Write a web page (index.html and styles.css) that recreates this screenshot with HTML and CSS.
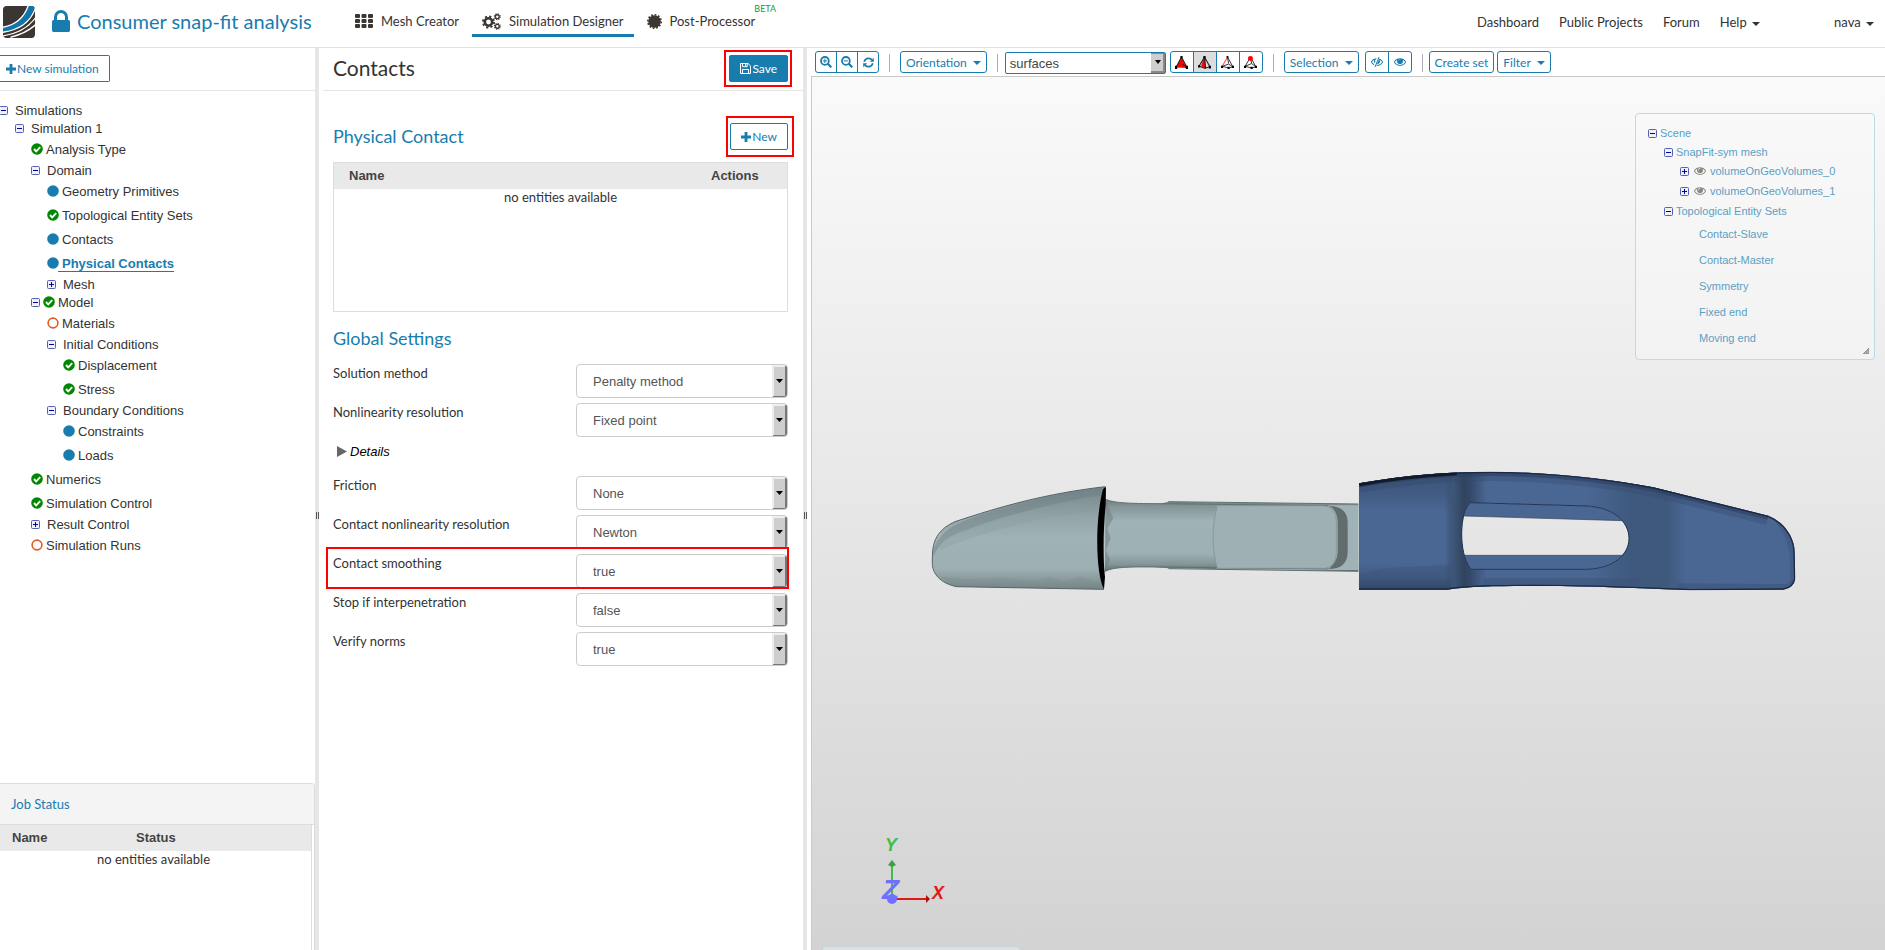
FILE: index.html
```html
<!DOCTYPE html>
<html lang="en">
<head>
  <meta charset="UTF-8">
  <meta name="viewport" content="width=device-width, initial-scale=1.0">
  <title>Consumer snap-fit analysis</title>
  <link rel="stylesheet" href="styles.css">
</head>
<body>
  <!-- shared icons -->
  <svg class="defs" width="0" height="0" aria-hidden="true">
    <symbol id="i-check" viewBox="0 0 12 12"><circle cx="6" cy="6" r="5.8" fill="#080"/><path d="M3 6l2.2 2.3L9.2 4.2" fill="none" stroke="#fff" stroke-width="1.9"/></symbol>
    <symbol id="i-dot" viewBox="0 0 12 12"><circle cx="6" cy="6" r="5.8" fill="#187cae"/></symbol>
    <symbol id="i-ring" viewBox="0 0 12 12"><circle cx="6" cy="6" r="4.9" fill="none" stroke="#e25b26" stroke-width="1.6"/></symbol>
    <symbol id="i-minus" viewBox="0 0 9 9"><rect x=".5" y=".5" width="8" height="8" rx="1" fill="#f0f0f4" stroke="#5560b0"/><path d="M2 4.5h5" stroke="#00a"/></symbol>
    <symbol id="i-plus" viewBox="0 0 9 9"><rect x=".5" y=".5" width="8" height="8" rx="1" fill="#f0f0f4" stroke="#5560b0"/><path d="M2 4.5h5M4.5 2v5" stroke="#00a"/></symbol>
    <symbol id="i-add" viewBox="0 0 10 10"><path d="M5 0v10M0 5h10" stroke="currentColor" stroke-width="2.8"/></symbol>
    <symbol id="i-eye" viewBox="0 384 1792 1152"><path fill="currentColor" d="M1664 960q-152-236-381-353 61 104 61 225 0 185-131.5 316.5t-316.5 131.5-316.5-131.5-131.5-316.5q0-121 61-225-229 117-381 353 133 205 333.5 326.5t434.5 121.5 434.5-121.5 333.5-326.5zm-720-384q0-20-14-34t-34-14q-125 0-214.5 89.5t-89.5 214.5q0 20 14 34t34 14 34-14 14-34q0-86 61-147t147-61q20 0 34-14t14-34zm848 384q0 34-20 69-140 230-376.5 368.5t-499.5 138.5-499.5-139-376.5-368q-20-35-20-69t20-69q140-229 376.5-368t499.5-139 499.5 139 376.5 368q20 35 20 69z"/></symbol>
  </svg>

  <header class="topbar">
    <a class="logo" href="#" aria-label="Home">
      <svg width="32" height="32" viewBox="0 0 96 96">
        <clipPath id="logo-clip"><rect width="96" height="96" rx="11"/></clipPath>
        <g clip-path="url(#logo-clip)">
          <rect width="96" height="96" fill="#3c3632"/>
          <path d="M74 0C64 34 38 57 0 65V78C50 70 82 48 96 0Z" fill="#0f75ac"/>
          <path d="M76 -2C64 34 38 57 -2 64" fill="none" stroke="#fff" stroke-width="4"/>
          <path d="M98 4C84 48 50 72 -2 79" fill="none" stroke="#fff" stroke-width="4"/>
          <path d="M-2 90C44 84 76 64 98 35" fill="none" stroke="#fff" stroke-width="4"/>
          <path d="M22 94C54 86 76 76 98 56" fill="none" stroke="#fff" stroke-width="4"/>
        </g>
      </svg>
    </a>
    <h1 class="project">
      <svg width="18" height="22" viewBox="320 128 1152 1408"><path fill="currentColor" d="M640 768h512v-192q0-106-75-181t-181-75-181 75-75 181v192zm832 96v576q0 40-28 68t-68 28h-960q-40 0-68-28t-28-68v-576q0-40 28-68t68-28h32v-192q0-184 132-316t316-132 316 132 132 316v192h32q40 0 68 28t28 68z"/></svg>
      Consumer snap-fit analysis
    </h1>
    <nav class="modes">
      <a href="#">
        <svg width="18" height="14" viewBox="0 0 18 14" fill="currentColor"><rect width="5" height="4" rx="1"/><rect x="6.5" width="5" height="4" rx="1"/><rect x="13" width="5" height="4" rx="1"/><rect y="5" width="5" height="4" rx="1"/><rect x="6.5" y="5" width="5" height="4" rx="1"/><rect x="13" y="5" width="5" height="4" rx="1"/><rect y="10" width="5" height="4" rx="1"/><rect x="6.5" y="10" width="5" height="4" rx="1"/><rect x="13" y="10" width="5" height="4" rx="1"/></svg>
        Mesh Creator
      </a>
      <a href="#" class="active">
        <svg width="19" height="17" viewBox="0 0 19 17" fill="none" stroke="currentColor">
          <circle cx="6.5" cy="9" r="3.7" stroke-width="2.6"/><circle cx="6.5" cy="9" r="5.6" stroke-width="1.8" stroke-dasharray="2.2 2.2"/>
          <circle cx="15.3" cy="3.7" r="1.9" stroke-width="1.4"/><circle cx="15.3" cy="3.7" r="2.9" stroke-width="1.2" stroke-dasharray="1.15 1.13"/>
          <circle cx="15.3" cy="13.3" r="1.9" stroke-width="1.4"/><circle cx="15.3" cy="13.3" r="2.9" stroke-width="1.2" stroke-dasharray="1.15 1.13"/>
        </svg>
        Simulation Designer
      </a>
      <a href="#">
        <svg width="15" height="15" viewBox="0 0 15 15"><circle cx="7.5" cy="7.5" r="6.3" fill="currentColor"/><circle cx="7.5" cy="7.5" r="6.7" fill="none" stroke="currentColor" stroke-width="1.6" stroke-dasharray="1.75 1.75"/></svg>
        Post-Processor
        <sup class="beta">BETA</sup>
      </a>
    </nav>
    <nav class="site-nav">
      <a href="#">Dashboard</a>
      <a href="#">Public Projects</a>
      <a href="#">Forum</a>
      <a href="#">Help <span class="caret"></span></a>
      <a href="#" class="user">nava <span class="caret"></span></a>
    </nav>
  </header>

  <main class="workspace">
    <aside class="sidebar">
      <div class="panel-head">
        <button type="button" class="btn btn-edge"><svg width="10" height="10"><use href="#i-add"/></svg>New simulation</button>
      </div>
      <ul class="tree">
        <li><div class="row"><svg class="tg"><use href="#i-minus"/></svg><a href="#">Simulations</a></div>
          <ul>
            <li><div class="row"><svg class="tg"><use href="#i-minus"/></svg><a href="#">Simulation 1</a></div>
              <ul>
                <li><div class="row leaf"><svg class="st"><use href="#i-check"/></svg><a href="#">Analysis Type</a></div></li>
                <li><div class="row"><svg class="tg"><use href="#i-minus"/></svg><a href="#">Domain</a></div>
                  <ul>
                    <li><div class="row leaf"><svg class="st"><use href="#i-dot"/></svg><a href="#">Geometry Primitives</a></div></li>
                    <li><div class="row leaf"><svg class="st"><use href="#i-check"/></svg><a href="#">Topological Entity Sets</a></div></li>
                    <li><div class="row leaf"><svg class="st"><use href="#i-dot"/></svg><a href="#">Contacts</a></div></li>
                    <li><div class="row leaf"><svg class="st"><use href="#i-dot"/></svg><a href="#" class="current">Physical Contacts</a></div></li>
                    <li><div class="row"><svg class="tg"><use href="#i-plus"/></svg><a href="#">Mesh</a></div></li>
                  </ul>
                </li>
                <li><div class="row"><svg class="tg"><use href="#i-minus"/></svg><svg class="st"><use href="#i-check"/></svg><a href="#">Model</a></div>
                  <ul>
                    <li><div class="row leaf"><svg class="st"><use href="#i-ring"/></svg><a href="#">Materials</a></div></li>
                    <li><div class="row"><svg class="tg"><use href="#i-minus"/></svg><a href="#">Initial Conditions</a></div>
                      <ul>
                        <li><div class="row leaf"><svg class="st"><use href="#i-check"/></svg><a href="#">Displacement</a></div></li>
                        <li><div class="row leaf"><svg class="st"><use href="#i-check"/></svg><a href="#">Stress</a></div></li>
                      </ul>
                    </li>
                    <li><div class="row"><svg class="tg"><use href="#i-minus"/></svg><a href="#">Boundary Conditions</a></div>
                      <ul>
                        <li><div class="row leaf"><svg class="st"><use href="#i-dot"/></svg><a href="#">Constraints</a></div></li>
                        <li><div class="row leaf"><svg class="st"><use href="#i-dot"/></svg><a href="#">Loads</a></div></li>
                      </ul>
                    </li>
                  </ul>
                </li>
                <li><div class="row leaf"><svg class="st"><use href="#i-check"/></svg><a href="#">Numerics</a></div></li>
                <li><div class="row leaf"><svg class="st"><use href="#i-check"/></svg><a href="#">Simulation Control</a></div></li>
                <li><div class="row"><svg class="tg"><use href="#i-plus"/></svg><a href="#">Result Control</a></div></li>
                <li><div class="row leaf"><svg class="st"><use href="#i-ring"/></svg><a href="#">Simulation Runs</a></div></li>
              </ul>
            </li>
          </ul>
        </li>
      </ul>
      <section class="jobs">
        <h2>Job Status</h2>
        <div class="jobs-body">
          <table class="grid">
            <thead><tr><th class="job-name">Name</th><th>Status</th></tr></thead>
            <tbody><tr><td colspan="2">no entities available</td></tr></tbody>
          </table>
        </div>
      </section>
    </aside>

    <div class="splitter"></div>

    <section class="settings">
      <div class="panel-head settings-head">
        <h2>Contacts</h2>
        <span class="mark mark-save"><button type="button" class="btn btn-primary"><svg width="11" height="11" viewBox="0 0 11 11" fill="none" stroke="currentColor"><path d="M.5.5h7.6l2.4 2.4v7.6H.5z"/><path d="M2.5.5v3.2h4.7V.5M2.5 10.5v-4h6v4M5.7.5v3"/></svg>Save</button></span>
      </div>
      <div class="settings-body">
        <div class="section-head">
          <h3>Physical Contact</h3>
          <span class="mark mark-new"><button type="button" class="btn"><svg width="10" height="10"><use href="#i-add"/></svg>New</button></span>
        </div>
        <div class="contact-list">
          <table class="grid">
            <thead><tr><th class="contact-name">Name</th><th>Actions</th></tr></thead>
            <tbody><tr><td colspan="2">no entities available</td></tr></tbody>
          </table>
        </div>
        <h3>Global Settings</h3>
        <form class="fields">
          <div class="field"><label for="method">Solution method</label><select id="method"><option>Penalty method</option></select></div>
          <div class="field"><label for="nonlin">Nonlinearity resolution</label><select id="nonlin"><option>Fixed point</option></select></div>
          <button type="button" class="details"><svg width="10" height="11" viewBox="0 0 10 11"><path d="M0 0l10 5.5L0 11z" fill="#666"/></svg>Details</button>
          <div class="field"><label for="friction">Friction</label><select id="friction"><option>None</option></select></div>
          <div class="field"><label for="contact-nonlin">Contact nonlinearity resolution</label><select id="contact-nonlin"><option>Newton</option></select></div>
          <div class="field mark mark-row"><label for="smoothing">Contact smoothing</label><select id="smoothing"><option>true</option><option>false</option></select></div>
          <div class="field"><label for="stop">Stop if interpenetration</label><select id="stop"><option>false</option><option>true</option></select></div>
          <div class="field"><label for="verify">Verify norms</label><select id="verify"><option>true</option><option>false</option></select></div>
        </form>
      </div>
    </section>

    <div class="splitter"></div>

    <section class="viewer">
      <div class="toolbar">
        <div class="group">
          <button type="button" aria-label="Zoom in"><svg width="12" height="12" viewBox="0 0 12 12" fill="none" stroke="currentColor"><circle cx="4.9" cy="4.9" r="3.9" stroke-width="1.8"/><path d="M7.8 7.8l3.5 3.5" stroke-width="2.2"/><path d="M2.8 4.9H7M4.9 2.8V7"/></svg></button>
          <button type="button" aria-label="Zoom out"><svg width="12" height="12" viewBox="0 0 12 12" fill="none" stroke="currentColor"><circle cx="4.9" cy="4.9" r="3.9" stroke-width="1.8"/><path d="M7.8 7.8l3.5 3.5" stroke-width="2.2"/><path d="M2.8 4.9H7"/></svg></button>
          <button type="button" aria-label="Reset view"><svg width="11" height="11" viewBox="0 0 11 11"><path d="M1.2 4.8C2 1.2 6.5.2 8.9 2.9M9.8 6.2C9 9.8 4.5 10.8 2.1 8.1" fill="none" stroke="currentColor" stroke-width="1.8"/><path d="M10.8.8v4H6.8zM.2 10.2v-4h4z" fill="currentColor"/></svg></button>
        </div>
        <i class="sep"></i>
        <button type="button" class="tool">Orientation <span class="caret"></span></button>
        <i class="sep"></i>
        <select class="render" aria-label="Render mode"><option>surfaces</option></select>
        <div class="group pick">
          <button type="button" aria-label="Pick volumes"><svg width="13" height="13" viewBox="0 0 12 12"><path d="M6 1L1 10.5l9.5.5z" fill="#f00"/><path d="M6 1L1 10.5M6 1l5 9.5M11 10.5l-4-3" stroke="#222" fill="none"/><path d="M0 9h2v3H0zM10 9h2v3h-2zM5 0h2v2H5z"/></svg></button>
          <button type="button" class="on" aria-label="Pick faces"><svg width="13" height="13" viewBox="0 0 12 12"><path d="M6 1L3.5 9 6.5 11z" fill="#f00" stroke="#f00"/><path d="M6 1L1 9.5l6 2M6 1l5 9M7 11l4-1M6 1l1 10" stroke="#222" fill="none"/><path d="M0 8.5h2v2H0zM10 9h2v2.5h-2zM5 0h2v2H5z"/></svg></button>
          <button type="button" aria-label="Pick edges"><svg width="13" height="13" viewBox="0 0 12 12"><path d="M6 1l5 9-4 1-6-1.500 6-2 4 2.500M6 1l1 6" stroke="#333" fill="none" stroke-width=".9"/><path d="M6 1L1.200 9.500" stroke="#f55"/><path d="M0 9h2v2H0zM10 9h2v2h-2zM6 10h2v2H6zM5.200 0h1.600v2H5.200z"/></svg></button>
          <button type="button" aria-label="Pick vertices"><svg width="13" height="13" viewBox="0 0 12 12"><path d="M6 1l5 9-4 1-6-1.500L6 1l1 6-6 2.500M7 7l4 3" stroke="#333" fill="none" stroke-width=".9"/><path d="M0 9h2v2H0zM10 9h2v2h-2zM6 10h2v2H6z"/><circle cx="6" cy="2.300" r="2.300" fill="#f00"/></svg></button>
        </div>
        <i class="sep"></i>
        <button type="button" class="tool">Selection <span class="caret"></span></button>
        <div class="group eyes">
          <button type="button" aria-label="Hide selection"><svg width="12" height="10" viewBox="0 0 12 10"><use href="#i-eye" width="12" height="8" y="1"/><path d="M7.5 0l-4 10" stroke="#fff" stroke-width="2.5"/><path d="M8 0L4 10" stroke="currentColor"/></svg></button>
          <button type="button" aria-label="Show all"><svg width="12" height="8"><use href="#i-eye"/><circle cx="6" cy="3.5" r="2.2" fill="currentColor"/></svg></button>
        </div>
        <i class="sep"></i>
        <button type="button" class="tool">Create set</button>
        <button type="button" class="tool">Filter <span class="caret"></span></button>
      </div>

      <div class="scene">
        <svg class="model" viewBox="812 77 1073 873" preserveAspectRatio="xMinYMin meet" role="img" aria-label="Snap-fit mesh">
          <defs>
            <linearGradient id="teal" x1="0" y1="0" x2="0" y2="1">
              <stop offset="0" stop-color="#74858a"/><stop offset=".3" stop-color="#93a5a8"/><stop offset=".5" stop-color="#9fb2b6"/><stop offset=".8" stop-color="#9dafb2"/><stop offset=".92" stop-color="#879799"/><stop offset="1" stop-color="#6d7b7d"/>
            </linearGradient>
            <linearGradient id="shaft" x1="0" y1="0" x2="0" y2="1">
              <stop offset="0" stop-color="#6c7a7c"/><stop offset=".1" stop-color="#849597"/><stop offset=".3" stop-color="#9fb2b6"/><stop offset=".75" stop-color="#9db0b3"/><stop offset=".9" stop-color="#849597"/><stop offset="1" stop-color="#5d6a6b"/>
            </linearGradient>
            <linearGradient id="block" x1="0" y1="0" x2="0" y2="1">
              <stop offset="0" stop-color="#3a5276"/><stop offset=".18" stop-color="#415b83"/><stop offset=".34" stop-color="#4a6794"/><stop offset=".76" stop-color="#4a6794"/><stop offset=".9" stop-color="#3f597f"/><stop offset="1" stop-color="#2b3f5d"/>
            </linearGradient>
            <linearGradient id="fold" x1="0" y1="0" x2="1" y2="0">
              <stop offset="0" stop-color="#34496a" stop-opacity="0"/><stop offset=".2" stop-color="#3d5678"/><stop offset=".45" stop-color="#30445f"/><stop offset=".6" stop-color="#34496a"/><stop offset="1" stop-color="#34496a" stop-opacity="0"/>
            </linearGradient>
            <linearGradient id="bend" x1="0" y1="0" x2="1" y2="0">
              <stop offset="0" stop-color="#3f597d" stop-opacity="0"/><stop offset=".45" stop-color="#3f597d"/><stop offset=".8" stop-color="#3f597d"/><stop offset="1" stop-color="#3f597d" stop-opacity="0"/>
            </linearGradient>
            <clipPath id="body-clip"><path clip-rule="evenodd" d="M57 100C200 75 320 65 450 65 620 66 800 85 940 112L1285 197C1330 215 1365 260 1364 310L1366 385Q1362 415 1330 419L1050 421C900 415 760 408 600 408 480 408 400 408 320 419H57ZM392 158L740 168C820 172 867 215 867 265 867 315 820 355 740 358H392C372 330 365 290 365 250 365 210 372 175 392 158Z"/></clipPath>
          </defs>

          <!-- slave part -->
          <g transform="translate(920 450) scale(.33333)">
            <path d="M556 147C575 158 620 161 720 161L745 155 1315 162V364L745 355 700 351C620 350 575 352 554 365Z" fill="url(#shaft)"/>
            <path d="M890 166H1315V360H890Z" fill="#9fb2b6"/>
            <path d="M745 155L1315 162M556 147C575 158 620 161 720 161L1225 167M554 365C575 352 620 350 700 351L1225 357M745 356L1315 364" fill="none" stroke="#617071" stroke-width="3"/>
            <path d="M1225 167Q1283 170 1283 215V305Q1283 357 1225 357 1250 340 1253 310V215Q1250 175 1225 167Z" fill="#626c6c"/>
            <path d="M892 167H1210Q1247 170 1249 212V312Q1246 350 1215 355H892C875 300 875 225 892 167Z" fill="#9eb0b3" stroke="#7d8d8f" stroke-width="2"/>
            <path d="M556 150L580 205 562 235 572 265 558 300 570 330 556 362Z" fill="#6c7b7d" opacity=".5"/>
            <path d="M37 320C37 265 60 235 105 215 240 170 380 130 556 110L552 418 110 410C60 400 37 370 37 340Z" fill="url(#teal)"/>
            <path d="M40 300C60 245 100 225 160 202 290 160 420 128 555 112L552 135C430 150 260 195 140 240 80 258 60 280 40 320Z" fill="#6f7f82" opacity=".45"/>
            <path d="M60 270C150 225 300 180 470 155L545 180C380 195 190 245 60 300Z" fill="#879a9d" opacity=".3"/>
            <path d="M60 380L130 388 270 385 330 395 390 382 430 395 480 380 545 400 552 418 110 410Z" fill="#7e8e91" opacity=".5"/>
            <path d="M105 215C240 170 380 130 556 110M552 418L110 410C60 400 37 370 37 340V320C37 265 60 235 105 215" fill="none" stroke="#566466" stroke-width="3"/>
            <path d="M549 118L558 110 557 165C549 240 549 330 555 380L552 418C527 370 524 210 549 118Z" fill="#000"/>
          </g>

          <!-- master part -->
          <g transform="translate(1340 450) scale(.33333)">
            <g clip-path="url(#body-clip)">
              <path d="M57 60H1370V425H57Z" fill="#4a6794"/>
              <path d="M57 65H345V421H57Z" fill="url(#block)"/>
              <path d="M57 375L130 355 330 345 345 421H57Z" fill="#3c5478" opacity=".35"/>
              <path d="M315 60H440V425H315Z" fill="url(#fold)"/>
              <path d="M740 60H1040V425H740Z" fill="url(#bend)"/>
              <path d="M1010 400L1340 402 1366 385V425H1010Z" fill="#3c5478" opacity=".6"/>
              <path d="M430 385H900V425H430Z" fill="#3c5478" opacity=".6"/>
              <path d="M1290 200C1325 230 1345 270 1350 330V400L1366 395V290L1320 200Z" fill="#3c5478" opacity=".5"/>
              <path d="M57 100C200 75 320 65 450 65 620 66 800 85 940 112L1285 197" fill="none" stroke="#34496a" stroke-width="56" opacity=".35"/>
              <path d="M57 100C200 75 320 65 450 65 620 66 800 85 940 112L1285 197" fill="none" stroke="#2c4060" stroke-width="26" opacity=".6"/>
              <path d="M57 100C200 75 320 65 450 65 620 66 800 85 940 112L1285 197C1330 215 1365 260 1364 310L1366 385Q1362 415 1330 419L1050 421C900 415 760 408 600 408 480 408 400 408 320 419H57" fill="none" stroke="#1b2a42" stroke-width="8"/>
              <path d="M57 102C150 84 250 74 350 68" fill="none" stroke="#111b2b" stroke-width="16"/>
            </g>
            <path fill-rule="evenodd" d="M392 158L740 168C820 172 867 215 867 265 867 315 820 355 740 358H392C372 330 365 290 365 250 365 210 372 175 392 158ZM372 198L848 212Q867 235 867 265 867 290 852 316H370Q360 250 372 198Z" fill="#4a6794"/>
            <path d="M392 158L740 168C820 172 867 215 867 265 867 315 820 355 740 358H392C372 330 365 290 365 250 365 210 372 175 392 158Z" fill="none" stroke="#23344f" stroke-width="3"/>
            <path d="M372 198L848 212M370 316H852" stroke="#3a4350" stroke-width="2"/>
          </g>

          <!-- axes -->
          <path d="M892 898V866" stroke="#4b4" stroke-width="2"/><path d="M888 865l4-5 4 5-4 2z" fill="#3f9e4a"/>
          <path d="M892 899h35" stroke="#e01818" stroke-width="2"/><path d="M926 895l4 4-4 4z" fill="#a11"/>
          <circle cx="892" cy="899" r="5" fill="#7070ff"/>
          <text class="axis" x="885" y="851" fill="#4b4">Y</text>
          <text class="axis" x="932" y="899" fill="#e01818">X</text>
          <text class="axis axis-z" x="882" y="899" fill="#7070ff">Z</text>
        </svg>

        <div class="outline">
          <ul>
            <li><div class="row"><svg class="tg"><use href="#i-minus"/></svg><a href="#">Scene</a></div>
              <ul>
                <li><div class="row"><svg class="tg"><use href="#i-minus"/></svg><a href="#">SnapFit-sym mesh</a></div>
                  <ul>
                    <li><div class="row volume"><svg class="tg"><use href="#i-plus"/></svg><svg class="vis"><use href="#i-eye"/></svg><a href="#">volumeOnGeoVolumes_0</a></div></li>
                    <li><div class="row volume"><svg class="tg"><use href="#i-plus"/></svg><svg class="vis"><use href="#i-eye"/></svg><a href="#">volumeOnGeoVolumes_1</a></div></li>
                  </ul>
                </li>
                <li><div class="row"><svg class="tg"><use href="#i-minus"/></svg><a href="#">Topological Entity Sets</a></div>
                  <ul class="sets">
                    <li><a href="#">Contact-Slave</a></li>
                    <li><a href="#">Contact-Master</a></li>
                    <li><a href="#">Symmetry</a></li>
                    <li><a href="#">Fixed end</a></li>
                    <li><a href="#">Moving end</a></li>
                  </ul>
                </li>
              </ul>
            </li>
          </ul>
          <svg class="grip" width="6" height="6" viewBox="0 0 6 6"><path d="M6 0v6H0z" fill="#aaa" stroke="#888" stroke-width=".8"/></svg>
        </div>
        <div class="drawer"></div>
      </div>
    </section>
  </main>
</body>
</html>
```
FILE: styles.css
```css
* {
  box-sizing: border-box;
}

body {
  margin: 0;
  height: 100vh;
  display: flex;
  flex-direction: column;
  overflow: hidden;
  background: #fff;
  color: #333;
  font-family: Lato, sans-serif;
  font-size: 13px;
}

h1, h2, h3 {
  margin: 0;
  font-weight: normal;
}

a {
  color: inherit;
  text-decoration: none;
}

ul {
  list-style: none;
  margin: 0;
  padding: 0;
}

svg {
  flex: none;
}

.defs {
  position: absolute;
}

.caret {
  display: inline-block;
  margin-left: 2px;
  vertical-align: middle;
  border-top: 4px solid currentColor;
  border-left: 4px solid transparent;
  border-right: 4px solid transparent;
}

/* top bar */
.topbar {
  flex: none;
  display: flex;
  height: 48px;
  padding-left: 3px;
  border-bottom: 1px solid #e1e1e1;
}

.logo {
  margin-top: 6px;
}

.project {
  display: flex;
  align-items: center;
  gap: 7px;
  width: 310px;
  height: 42px;
  padding-left: 17px;
  color: #187cae;
  font-size: 20px;
}

.modes {
  display: flex;
}

.modes a {
  display: flex;
  align-items: center;
  gap: 8px;
  height: 37px;
  padding: 8px 10px 0;
  border-bottom: 3px solid transparent;
  margin-right: 3px;
}

.modes .active {
  border-color: #187cae;
}

.modes svg {
  color: #3c3632;
}

.beta {
  align-self: flex-start;
  margin: -5px 0 0 -9px;
  color: #189a2c;
  font-size: 9px;
}

.site-nav {
  display: flex;
  gap: 20px;
  height: 44px;
  margin-left: auto;
  padding-right: 11px;
  align-items: center;
}

.user {
  margin-left: 54px;
}

/* columns */
.workspace {
  flex: 1;
  display: flex;
  min-height: 0;
}

.sidebar {
  width: 315px;
  flex: none;
  display: flex;
  flex-direction: column;
}

.splitter {
  flex: none;
  width: 4px;
  background: #e6e6e6;
  display: flex;
  align-items: center;
}

.splitter::before {
  content: "";
  width: 3px;
  height: 7px;
  margin: 32px 0 0 1px;
  border: solid #555;
  border-width: 0 1px;
}

.panel-head {
  flex: none;
  height: 43px;
  padding-top: 7px;
  border-bottom: 1px solid #e6e6e6;
}

.btn {
  display: flex;
  align-items: center;
  justify-content: center;
  gap: 1px;
  height: 27px;
  padding: 0 10px;
  background: #fff;
  border: 1px solid #187cae;
  border-radius: 2px;
  color: #187cae;
  font: 12px Lato, sans-serif;
}

.btn-edge {
  padding-left: 6px;
  border-left: 0;
  border-radius: 0 2px 2px 0;
}

.btn-primary {
  background: #187cae;
  color: #fff;
}

/* trees */
.row {
  display: flex;
  align-items: center;
  height: 18px;
}

.row.leaf {
  height: 24px;
}

.row a {
  padding-left: 4px;
}

.tg {
  width: 9px;
  height: 9px;
  margin: 1px 3px 0 0;
}

.st {
  width: 12px;
  height: 12px;
  margin-right: -1px;
}

.tree {
  flex: 1;
  margin-left: -1px;
  padding-top: 10px;
  font: 13px "Liberation Sans", sans-serif;
}

.tree ul {
  padding-left: 16px;
}

.tree .current {
  padding-top: 1px;
  color: #187cae;
  font-weight: bold;
  border-bottom: 1px solid #187cae;
}

/* job list */
.jobs {
  height: 167px;
  border-top: 1px solid #ddd;
  border-right: 1px solid #ddd;
  border-radius: 0 4px 0 0;
  overflow: hidden;
}

.jobs h2 {
  height: 41px;
  padding-left: 11px;
  background: #f4f4f4;
  border-bottom: 1px solid #ddd;
  color: #187cae;
  font-size: 13px;
  line-height: 41px;
}

.jobs-body {
  height: 100%;
  margin-left: -4px;
  margin-right: 2px;
  border-right: 1px solid #ddd;
}

.grid {
  width: 100%;
  border-collapse: collapse;
}

.grid th {
  height: 26px;
  padding: 0 0 1px;
  background: #e9e9e9;
  color: #444;
  font: bold 13px "Liberation Sans", sans-serif;
  text-align: left;
}

.grid td {
  padding: 0;
  text-align: center;
}

.grid .job-name {
  width: 140px;
  padding-left: 16px;
}

.grid .contact-name {
  width: 377px;
  padding-left: 15px;
}

/* settings column */
.settings {
  flex: none;
  width: 484px;
}

.settings-head {
  display: flex;
  justify-content: space-between;
  align-items: flex-start;
  margin-left: 4px;
  padding-left: 10px;
  padding-right: 15px;
}

.settings-head h2 {
  font-size: 21px;
  line-height: 25px;
}

.settings-body {
  padding: 32px 15px 0 14px;
}

.settings h3 {
  color: #187cae;
  font-size: 18px;
  line-height: 27px;
}

.section-head {
  display: flex;
  justify-content: space-between;
  align-items: flex-start;
  margin-bottom: 12px;
}

.contact-list {
  height: 150px;
  margin-bottom: 13px;
  border: 1px solid #ddd;
}

.mark {
  position: relative;
}

/* red frames drawn over the highlighted controls */
.mark::after {
  content: "";
  position: absolute;
  border: 2px solid #f00;
  pointer-events: none;
}

.mark-save::after {
  inset: -5px -4px -5px -5px;
}

.mark-new::after {
  inset: -7px -6px -7px -4px;
}

.mark-row::after {
  inset: -7px -1px -1px -7px;
}

.fields {
  margin-top: 12px;
}

.field {
  display: flex;
  justify-content: space-between;
  margin-bottom: 5px;
}

.field label {
  line-height: 18px;
}

.field select {
  appearance: none;
  width: 212px;
  height: 34px;
  padding: 0 16px;
  border: 1px solid #ccc;
  border-radius: 4px;
  background: #fff url("data:image/svg+xml,%3Csvg xmlns='http://www.w3.org/2000/svg' width='15' height='32'%3E%3Cpath fill='%23eee' d='M0 0h15v32H0z'/%3E%3Cpath fill='%23777' d='M1 32V31H13V1h2v31z'/%3E%3Cpath fill='%23cecece' d='M2 2h11v29H2z'/%3E%3Cpath d='M4 14h7l-3.5 4z'/%3E%3C/svg%3E") right center no-repeat;
  color: #555;
  font: 13px "Liberation Sans", sans-serif;
}

.details {
  display: flex;
  align-items: center;
  gap: 3px;
  height: 18px;
  margin-bottom: 16px;
  padding: 0 4px;
  border: 0;
  background: none;
  color: #000;
  font: italic 13px "Liberation Sans", sans-serif;
}

/* 3D viewer */
.viewer {
  flex: 1;
  min-width: 0;
  display: flex;
  flex-direction: column;
}

.toolbar {
  flex: none;
  display: flex;
  height: 28px;
  padding: 3px 8px 0;
}

.toolbar button {
  height: 22px;
  padding: 0 5px;
  background: #fff;
  border: 1px solid #187cae;
  color: #187cae;
  font: 12px Lato, sans-serif;
}

.toolbar .tool {
  margin-right: 3px;
  border-radius: 3px;
  white-space: nowrap;
}

.tool .caret {
  margin-left: 3px;
}

.group {
  display: flex;
}

.toolbar .group button {
  display: flex;
  align-items: center;
  justify-content: center;
  width: 22px;
  padding: 0;
  margin-right: -1px;
}

.group button:first-child {
  border-radius: 3px 0 0 3px;
}

.toolbar .group button:last-child {
  margin-right: 0;
  border-radius: 0 3px 3px 0;
}

.toolbar .group .on {
  background: #ddd;
}

.pick {
  margin-left: 4px;
}

.toolbar .pick button {
  width: 24px;
}

.eyes {
  margin-left: 3px;
}

.toolbar .eyes button {
  width: 24px;
}

.sep {
  width: 1px;
  height: 18px;
  margin: 3px 10px 0;
  background: #b0a8b8;
}

.tool + .sep {
  margin-left: 7px;
  margin-right: 7px;
}

.eyes + .sep {
  margin-right: 6px;
}

.render {
  appearance: none;
  width: 161px;
  height: 22px;
  margin-top: 1px;
  padding: 0 4px;
  border: 1px solid #187cae;
  border-radius: 2px;
  background: #fff url("data:image/svg+xml,%3Csvg xmlns='http://www.w3.org/2000/svg' width='14' height='20'%3E%3Cpath fill='%23888' d='M0 0h14v20H0z'/%3E%3Cpath fill='%23cecece' d='M0 1h12v17H0z'/%3E%3Cpath d='M4 7h6l-3 4z'/%3E%3C/svg%3E") right center no-repeat;
  color: #444;
  font: 13px "Liberation Sans", sans-serif;
}

.scene {
  flex: 1;
  position: relative;
  margin-left: 4px;
  overflow: hidden;
  border-top: 1px solid #c8c8c8;
  border-left: 1px solid #c8c8c8;
  background: linear-gradient(#fafafa, #d3d3d3);
}

.model {
  display: block;
  width: 100%;
}

.axis {
  font: italic bold 18px "Liberation Sans", sans-serif;
}

.axis-z {
  font-size: 28px;
}

.outline {
  position: absolute;
  top: 36px;
  right: 10px;
  width: 240px;
  height: 247px;
  padding: 9px 12px;
  border: 1px solid #b8dde6;
  border-radius: 4px;
  background: rgba(250, 250, 250, 0.4);
  color: #5ba0c4;
  font: 11px "Liberation Sans", sans-serif;
}

.outline .row {
  height: 19px;
}

.outline .row.volume {
  height: 20px;
}

.outline .row a {
  padding-left: 0;
}

.outline ul ul {
  padding-left: 16px;
}

.outline ul .sets {
  padding: 1px 0 0 35px;
}

.sets li {
  height: 26px;
  line-height: 26px;
}

.vis {
  width: 12px;
  height: 8px;
  margin: 0 4px 0 2px;
  color: #888880;
}

.grip {
  position: absolute;
  right: 5px;
  bottom: 5px;
}

.drawer {
  position: absolute;
  left: 10px;
  bottom: 0;
  width: 198px;
  height: 4px;
  border: 1px solid #c2d6dc;
  border-bottom: 0;
  border-radius: 3px 3px 0 0;
  background: #dfdfdf;
}
```
